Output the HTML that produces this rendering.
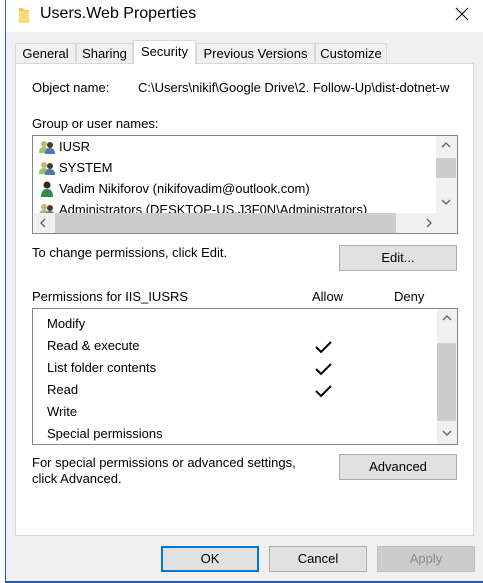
<!DOCTYPE html>
<html><head><style>
*{margin:0;padding:0;box-sizing:border-box}
body{width:483px;height:583px;background:#fff;position:relative;overflow:hidden;font-family:"Liberation Sans",sans-serif;font-size:13px;color:#000}
.a{position:absolute;white-space:nowrap}
.win{position:absolute;left:5px;top:-1px;width:490px;height:584px;border-left:1px solid #2b5fb0;border-bottom:2px solid #2b5fb0;background:#f0f0f0}
.title{position:absolute;left:6px;top:0;width:477px;height:32px;background:#fff}
.tab{position:absolute;top:43px;height:20px;border:1px solid #d9d9d9;border-bottom:none;background:#f0f0f0;text-align:center;line-height:20px;font-size:13px}
.btn{position:absolute;background:#e1e1e1;border:1px solid #adadad;text-align:center;font-size:13px}
.sb{position:absolute;background:#f0f0f0}
.th{position:absolute;background:#cdcdcd}
.row{position:absolute;font-size:13px}
.ic{position:absolute;width:16px;height:14px}
</style></head><body>
<div class="win"></div>
<div class="title"></div>
<svg class="a" style="left:18px;top:6px" width="12" height="18"><path d="M1 2h4l1 2h5v13H1z" fill="#f2c55c"/><path d="M1 5h10v12H1z" fill="#ffd972"/></svg>
<div class="a" style="left:40px;top:5px;font-size:16px">Users.Web Properties</div>
<svg class="a" style="left:455px;top:7px" width="14" height="14"><path d="M1 1L13 13M13 1L1 13" stroke="#000" stroke-width="1.1"/></svg>

<div class="a" style="left:15px;top:63px;width:459px;height:473px;background:#fff;border:1px solid #d9d9d9"></div>
<div class="tab" style="left:15px;width:61px">General</div>
<div class="tab" style="left:76px;width:57px">Sharing</div>
<div class="tab" style="left:133px;width:63px;top:40px;height:24px;background:#fff;line-height:22px">Security</div>
<div class="tab" style="left:196px;width:119px">Previous Versions</div>
<div class="tab" style="left:315px;width:72px">Customize</div>

<div class="a" style="left:32px;top:80px">Object name:</div>
<div class="a" style="left:138px;top:80px;width:320px;overflow:hidden">C:\Users\nikif\Google Drive\2. Follow-Up\dist-dotnet-w</div>
<div class="a" style="left:32px;top:116px">Group or user names:</div>

<div class="a" style="left:32px;top:135px;width:426px;height:99px;border:1px solid #828790;background:#fff;overflow:hidden">
 <div class="row" style="left:26px;top:3px">IUSR</div>
 <div class="row" style="left:26px;top:24px">SYSTEM</div>
 <div class="row" style="left:26px;top:45px">Vadim Nikiforov (nikifovadim@outlook.com)</div>
 <div class="row" style="left:26px;top:66px">Administrators (DESKTOP-US.J3F0N\Administrators)</div>
 <svg class="ic" style="left:6px;top:4px"><circle cx="5" cy="4" r="3" fill="#c9b27a"/><path d="M0 13q0-6 5-6t5 6z" fill="#9bbf6a"/><circle cx="11" cy="5" r="3" fill="#4a3a2a"/><path d="M6 14q0-6 5-6t5 6z" fill="#4a7ab8"/></svg>
 <svg class="ic" style="left:6px;top:25px"><circle cx="5" cy="4" r="3" fill="#c9b27a"/><path d="M0 13q0-6 5-6t5 6z" fill="#9bbf6a"/><circle cx="11" cy="5" r="3" fill="#4a3a2a"/><path d="M6 14q0-6 5-6t5 6z" fill="#4a7ab8"/></svg>
 <svg class="ic" style="left:6px;top:45px;height:16px"><circle cx="8" cy="4" r="3.5" fill="#3a2a1a"/><path d="M2 16q0-8 6-8t6 8z" fill="#2f8a4a"/></svg>
 <svg class="ic" style="left:6px;top:67px"><circle cx="5" cy="4" r="3" fill="#c9b27a"/><path d="M0 13q0-6 5-6t5 6z" fill="#9bbf6a"/><circle cx="11" cy="5" r="3" fill="#4a3a2a"/><path d="M6 14q0-6 5-6t5 6z" fill="#4a7ab8"/></svg>
 <div class="sb" style="left:403px;top:0;width:21px;height:77px"></div>
 <div class="th" style="left:403px;top:22px;width:20px;height:20px"></div>
 <svg class="a" style="left:408px;top:5px" width="10" height="8"><path d="M1 6L5 2L9 6" stroke="#606060" stroke-width="1.3" fill="none"/></svg>
 <svg class="a" style="left:408px;top:62px" width="10" height="8"><path d="M1 2L5 6L9 2" stroke="#606060" stroke-width="1.3" fill="none"/></svg>
 <div class="sb" style="left:0;top:77px;width:424px;height:20px"></div>
 <div class="th" style="left:22px;top:77px;width:341px;height:20px"></div>
 <svg class="a" style="left:6px;top:82px" width="8" height="10"><path d="M6 1L2 5L6 9" stroke="#606060" stroke-width="1.3" fill="none"/></svg>
 <svg class="a" style="left:392px;top:82px" width="8" height="10"><path d="M2 1L6 5L2 9" stroke="#606060" stroke-width="1.3" fill="none"/></svg>
</div>

<div class="a" style="left:32px;top:245px">To change permissions, click Edit.</div>
<div class="btn" style="left:339px;top:245px;width:118px;height:26px;line-height:24px">Edit...</div>

<div class="a" style="left:32px;top:289px">Permissions for IIS_IUSRS</div>
<div class="a" style="left:312px;top:289px">Allow</div>
<div class="a" style="left:394px;top:289px">Deny</div>

<div class="a" style="left:32px;top:308px;width:426px;height:137px;border:1px solid #828790;background:#fff;overflow:hidden">
 <div class="row" style="left:14px;top:7px">Modify</div>
 <div class="row" style="left:14px;top:29px">Read &amp; execute</div>
 <div class="row" style="left:14px;top:51px">List folder contents</div>
 <div class="row" style="left:14px;top:73px">Read</div>
 <div class="row" style="left:14px;top:95px">Write</div>
 <div class="row" style="left:14px;top:117px">Special permissions</div>
 <svg class="a" style="left:282px;top:31px" width="18" height="14"><path d="M1 7L6 12L16 2" stroke="#000" stroke-width="2" fill="none"/></svg>
 <svg class="a" style="left:282px;top:53px" width="18" height="14"><path d="M1 7L6 12L16 2" stroke="#000" stroke-width="2" fill="none"/></svg>
 <svg class="a" style="left:282px;top:75px" width="18" height="14"><path d="M1 7L6 12L16 2" stroke="#000" stroke-width="2" fill="none"/></svg>
 <div class="sb" style="left:404px;top:0;width:20px;height:135px"></div>
 <div class="th" style="left:404px;top:34px;width:19px;height:78px"></div>
 <svg class="a" style="left:409px;top:5px" width="10" height="8"><path d="M1 6L5 2L9 6" stroke="#606060" stroke-width="1.3" fill="none"/></svg>
 <svg class="a" style="left:409px;top:120px" width="10" height="8"><path d="M1 2L5 6L9 2" stroke="#606060" stroke-width="1.3" fill="none"/></svg>
</div>

<div class="a" style="left:32px;top:455px;line-height:15.5px">For special permissions or advanced settings,<br>click Advanced.</div>
<div class="btn" style="left:339px;top:454px;width:118px;height:26px;line-height:24px">Advanced</div>

<div class="btn" style="left:161px;top:546px;width:98px;height:26px;line-height:22px;border:2px solid #0078d7">OK</div>
<div class="btn" style="left:269px;top:546px;width:98px;height:26px;line-height:24px">Cancel</div>
<div class="btn" style="left:377px;top:546px;width:98px;height:26px;line-height:24px;background:#cccccc;border-color:#bfbfbf;color:#8d8d8d">Apply</div>
</body></html>
